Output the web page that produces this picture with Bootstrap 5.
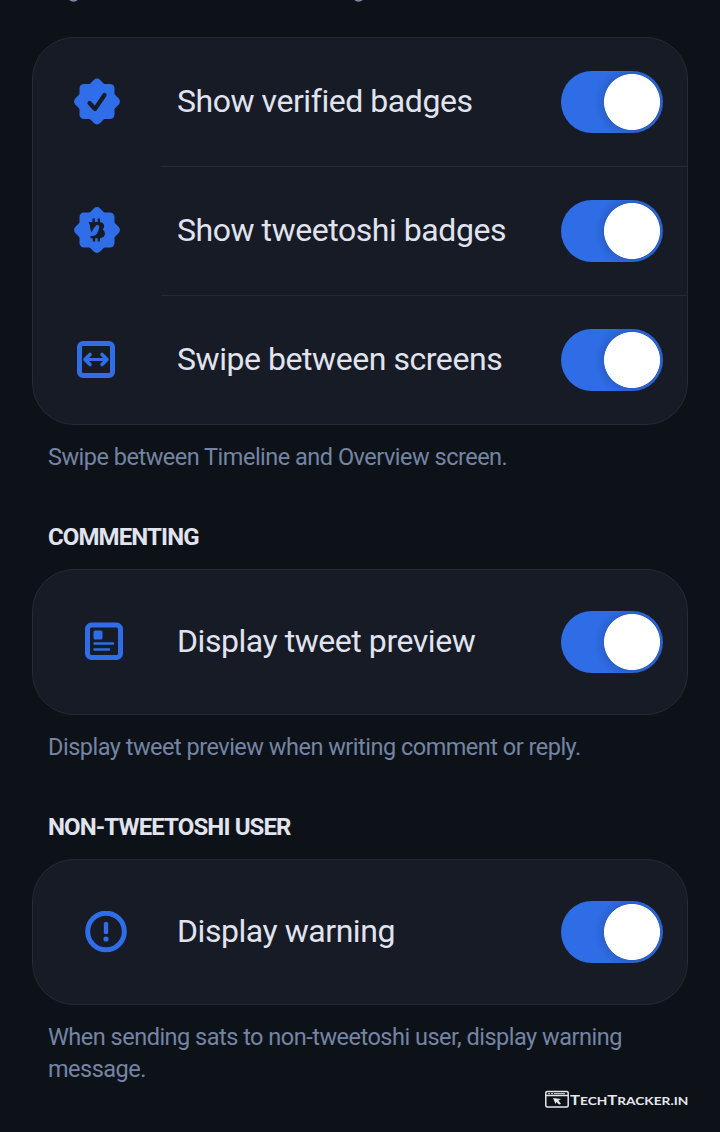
<!DOCTYPE html>
<html lang="en" data-bs-theme="dark">
<head>
<meta charset="utf-8">
<meta name="viewport" content="width=device-width, initial-scale=1">
<title>Settings</title>
<link href="https://cdn.jsdelivr.net/npm/bootstrap@5.3.0/dist/css/bootstrap.min.css" rel="stylesheet">
<style>
body{background:#0d1219;font-family:Roboto,"Liberation Sans",sans-serif;min-height:1132px;overflow:hidden}
.previous-note{height:37px;color:#7e8aa9}
.previous-note svg{display:block}
.settings-card{background:#161b26;border:1px solid #252a35;border-radius:42px;overflow:hidden}
.setting{height:128px}
.setting.single{height:144px}
.setting + .setting{height:129px}
.setting + .setting .setting-body{border-top:1px solid #252a35}
.icon-cell{width:128px;flex:none;color:#2f6ee8;padding-bottom:1px}
.icon-cell svg{display:block}
.setting-body{padding:0 24px 0 16px}
.setting-label{font-size:32px;line-height:40px;letter-spacing:-.45px;color:#e1e3ef;white-space:nowrap;padding-bottom:2px}
.note-text{font-size:23.5px;line-height:32px;letter-spacing:-.5px;color:#7484a3;margin:16px 0 0}
.group-title{font-size:24px;line-height:32px;letter-spacing:-.88px;font-weight:700;color:#e1e3ef;margin:48px 0 16px}
.form-switch .form-check-input.toggle{width:102px;height:62px;margin:0;float:none;border:0;border-radius:31px;display:block;
background-color:#2f6de6;background-image:radial-gradient(circle at 71px 31px,#fff 27.6px,#2a60c8 28.4px,#2b65d6 31px,rgba(47,109,230,0) 38px);background-size:100% 100%;background-position:0 0;box-shadow:none}
.watermark{position:absolute;left:545px;top:1089px;height:20px;color:#e4e6ea}
.watermark .brand{font:700 11.5px/20px Lato,sans-serif;white-space:nowrap;margin-left:1px;transform:scaleX(1.19);transform-origin:0 50%;padding-top:2px}
.watermark .initial{font-size:14px}
</style>
</head>
<body class="position-relative">
<div class="previous-note" aria-hidden="true">
<svg width="720" height="4" fill="none" stroke="currentColor" stroke-width="2"><path d="M69.500-1Q73.500 2.300 77.500-1M354.500-1Q358.500 2.300 362.500-1"/></svg>
</div>
<main class="px-3 mx-3">
<section class="settings-card">
  <div class="setting d-flex">
    <div class="icon-cell d-flex align-items-center justify-content-center">
      <svg width="48" height="48" viewBox="-24 -23.500 48 48" fill="currentColor"><rect x="-17.500" y="-17.500" width="35" height="35" rx="4.500"/><rect x="-17.500" y="-17.500" width="35" height="35" rx="4.500" transform="rotate(45)"/><path d="M-7.500 1.500-2 7.500 7.500-6.500" fill="none" stroke="#161b26" stroke-width="4.200" stroke-linecap="round" stroke-linejoin="round"/></svg>
    </div>
    <div class="setting-body flex-grow-1 d-flex align-items-center justify-content-between"><label class="setting-label" for="verified">Show verified badges</label><div class="form-check form-switch p-0 m-0"><input class="form-check-input toggle" type="checkbox" role="switch" id="verified" checked></div></div>
  </div>
  <div class="setting d-flex">
    <div class="icon-cell d-flex align-items-center justify-content-center">
      <svg width="48" height="48" viewBox="-24 -24 48 48" fill="currentColor"><rect x="-17.500" y="-17.500" width="35" height="35" rx="4.500"/><rect x="-17.500" y="-17.500" width="35" height="35" rx="4.500" transform="rotate(45)"/><path fill="#161b26" d="M-8.500-8H-4.500V-11.500H-2.200V-8H.7V-11.500H3V-8C7.500-7.500 8.500-2.500 5.500-.5 9.500 2 8.500 8 3 8.200V11.500H.7V8.200H-1.800V11.500H-4.200V8.200H-6.500V6C-5 6-4 5-4.500 3.500-6.500 1-7-2-7-4.500Z"/><path d="M-6 6C-4.500 4-5.500 1.500-4-.5-3-2-1.500-4.500.5-5.200L2.200-4C2.500-1.500 1 1 .5 2.500-.5 5-2.500 6.500-6 6Z"/></svg>
    </div>
    <div class="setting-body flex-grow-1 d-flex align-items-center justify-content-between"><label class="setting-label" for="tweetoshi">Show tweetoshi badges</label><div class="form-check form-switch p-0 m-0"><input class="form-check-input toggle" type="checkbox" role="switch" id="tweetoshi" checked></div></div>
  </div>
  <div class="setting d-flex">
    <div class="icon-cell d-flex align-items-center ps-5">
      <svg style="margin-left:-5px" width="40" height="40" viewBox="-20 -20.500 40 40" fill="none" stroke="currentColor" stroke-linecap="round" stroke-linejoin="round"><rect x="-16.500" y="-16" width="33" height="32" rx="3.500" stroke-width="5"/><path d="M-9 0H9" stroke-width="3"/><path d="M-6-5-11 0-6 5M6-5 11 0 6 5" stroke-width="3.600"/></svg>
    </div>
    <div class="setting-body flex-grow-1 d-flex align-items-center justify-content-between"><label class="setting-label" for="swipe">Swipe between screens</label><div class="form-check form-switch p-0 m-0"><input class="form-check-input toggle" type="checkbox" role="switch" id="swipe" checked></div></div>
  </div>
</section>
<p class="note-text px-3">Swipe between Timeline and Overview screen.</p>

<h2 class="group-title px-3">COMMENTING</h2>
<section class="settings-card">
  <div class="setting single d-flex">
    <div class="icon-cell d-flex align-items-center ps-5">
      <svg class="ms-1" width="40" height="40" viewBox="-20 -20 40 40" fill="none" stroke="currentColor"><rect x="-17.500" y="-17" width="33" height="32.500" rx="4" stroke-width="5"/><rect x="-11.500" y="-11.500" width="9" height="9" rx="1.500" fill="currentColor" stroke="none"/><path d="M-10.500 1.500H8M-10.500 7.500H4" stroke-width="2.500" stroke-linecap="round"/></svg>
    </div>
    <div class="setting-body flex-grow-1 d-flex align-items-center justify-content-between"><label class="setting-label" for="preview">Display tweet preview</label><div class="form-check form-switch p-0 m-0"><input class="form-check-input toggle" type="checkbox" role="switch" id="preview" checked></div></div>
  </div>
</section>
<p class="note-text px-3">Display tweet preview when writing comment or reply.</p>

<h2 class="group-title px-3">NON-TWEETOSHI USER</h2>
<section class="settings-card">
  <div class="setting single d-flex">
    <div class="icon-cell d-flex align-items-center ps-5">
      <svg class="ms-1" width="42" height="42" viewBox="-21 -20.500 42 42" fill="none" stroke="currentColor"><circle r="18.300" stroke-width="5"/><rect x="-2.200" y="-9.500" width="4.400" height="12" rx="1.500" fill="currentColor" stroke="none"/><circle cy="7.500" r="2.600" fill="currentColor" stroke="none"/></svg>
    </div>
    <div class="setting-body flex-grow-1 d-flex align-items-center justify-content-between"><label class="setting-label" for="warning">Display warning</label><div class="form-check form-switch p-0 m-0"><input class="form-check-input toggle" type="checkbox" role="switch" id="warning" checked></div></div>
  </div>
</section>
<p class="note-text px-3">When sending sats to non-tweetoshi user, display warning message.</p>
</main>
<div class="watermark d-flex align-items-center">
<svg width="24" height="20" viewBox="0 0 24 20" fill="none" stroke="currentColor" stroke-width="1.500"><rect x=".8" y="2.500" width="22.400" height="15.500" rx="1.500"/><path d="M1 6.500H23"/><path d="M3 4.700H5M6 4.700H8M9 4.700H20" stroke-width="1"/><path d="M8 9 16 10 13.500 11.500 16 15 14 15.500 11.500 13 10.500 15Z" fill="currentColor" stroke="none"/></svg>
<div class="brand"><span class="initial">T</span>ECH<span class="initial">T</span>RACKER.IN</div>
</div>
<script src="https://cdn.jsdelivr.net/npm/bootstrap@5.3.0/dist/js/bootstrap.bundle.min.js"></script>
</body>
</html>
